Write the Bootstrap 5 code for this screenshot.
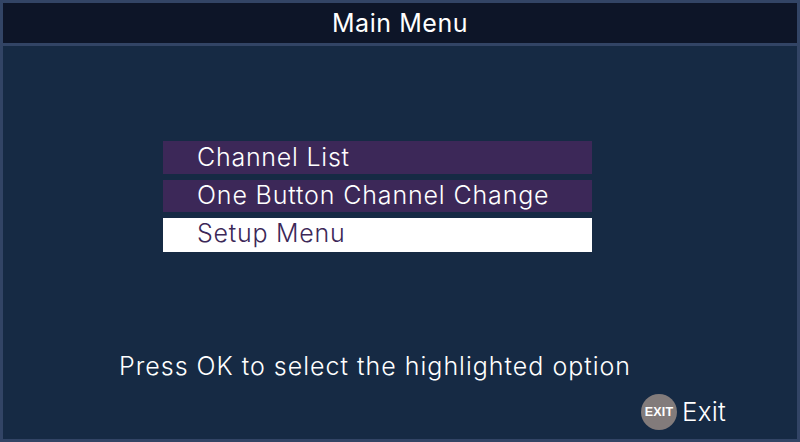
<!DOCTYPE html>
<html lang="en">
<head>
<meta charset="utf-8">
<title>Main Menu</title>
<link rel="stylesheet" href="https://cdn.jsdelivr.net/npm/bootstrap@5.3.0/dist/css/bootstrap.min.css">
<style>
html,body{height:100%;margin:0;overflow:hidden}
body{background:#324465;font-family:"Inter","Liberation Sans",sans-serif;font-weight:300;color:#fff}
.tv-frame{height:442px;padding:3px}
.tv-head{height:40px;background:#0d1528;font-size:25px;line-height:40px;letter-spacing:.55px;font-weight:400;color:#fff}
.tv-gap{height:3px}
.tv-body{height:393px;background:#162a44;padding:95px 0 0 160px;position:relative}
.tv-menu{width:429px;gap:6px}
.tv-item{height:33px;background:#3c2858;padding-left:34px;font-size:25px;line-height:33px;letter-spacing:.75px}
.tv-item+.tv-item{height:32px;line-height:31px;letter-spacing:.85px}
.tv-item.is-on{background:#fff;color:#3c2858;height:34px;line-height:31px;letter-spacing:.75px}
.tv-hint{font-size:25px;margin:98px 0 0 -44px;line-height:32px;letter-spacing:1px}
.tv-exit{margin:12px 0 0 478px;gap:5px;font-size:26px;line-height:36px;letter-spacing:.2px}
.tv-badge{width:36px;height:36px;border-radius:50%;background:#827b7b;color:#fff;font:700 12.5px/36px "Liberation Sans",sans-serif;text-align:center}
</style>
</head>
<body>
<div class="tv-frame d-flex flex-column">
  <div class="tv-head text-center">Main Menu</div>
  <div class="tv-gap"></div>
  <div class="tv-body">
    <div class="tv-menu d-flex flex-column">
      <div class="tv-item">Channel List</div>
      <div class="tv-item">One Button Channel Change</div>
      <div class="tv-item is-on">Setup Menu</div>
    </div>
    <div class="tv-hint">Press OK to select the highlighted option</div>
    <div class="tv-exit d-flex align-items-center"><span class="tv-badge">EXIT</span><span>Exit</span></div>
  </div>
</div>
<script src="https://cdn.jsdelivr.net/npm/bootstrap@5.3.0/dist/js/bootstrap.bundle.min.js"></script>
</body>
</html>
